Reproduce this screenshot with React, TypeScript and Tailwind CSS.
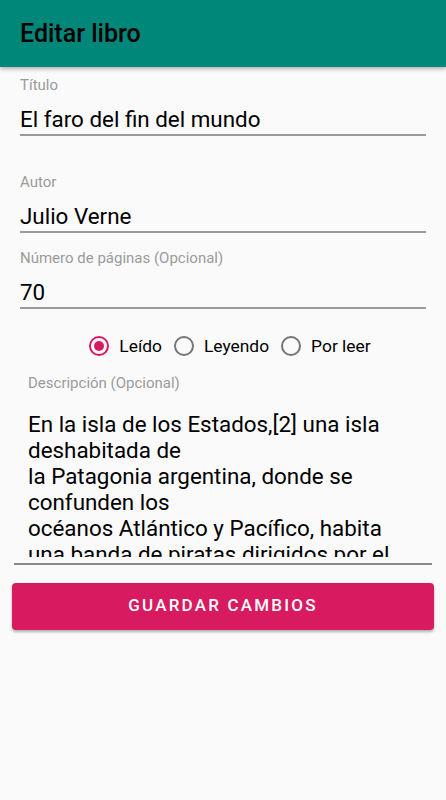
import { useState } from "react";

const font = { fontFamily: "Roboto, 'Noto Sans', sans-serif" };

function Field({ label, value, top }: { label: string; value: string; top: string }) {
  return (
    <div className={`mx-5 ${top}`}>
      <div className="h-5 text-[15px] leading-5 text-[#9a9a9a]">{label}</div>
      <div className="mt-[10px] h-7 text-[22.4px] leading-7 text-black">{value}</div>
      <div className="mt-px h-[2px] bg-[#9a9a9a]" />
    </div>
  );
}

function Radio({ label, checked, onClick }: { label: string; checked: boolean; onClick: () => void }) {
  return (
    <button type="button" onClick={onClick} className="flex items-center gap-[10px]">
      <span
        className={`flex h-5 w-5 items-center justify-center rounded-full border-2 ${
          checked ? "border-[#d81b60]" : "border-[#757575]"
        }`}
      >
        {checked && <span className="h-[10px] w-[10px] rounded-full bg-[#d81b60]" />}
      </span>
      <span className="text-[17.4px] leading-6 text-black">{label}</span>
    </button>
  );
}

export default function App() {
  const [status, setStatus] = useState("leido");
  const lines = [
    "En la isla de los Estados,[2] una isla",
    "deshabitada de",
    "la Patagonia argentina, donde se",
    "confunden los",
    "océanos Atlántico y Pacífico, habita",
    "una banda de piratas dirigidos por el",
  ];

  return (
    <div className="min-h-[800px] w-full bg-[#fafafa]" style={font}>
      <header className="relative z-10 flex h-[67px] items-center bg-[#00877a] px-5 shadow-[0_2px_4px_rgba(0,0,0,0.3)]">
        <h1 className="text-[25px] font-medium text-black">Editar libro</h1>
      </header>

      <Field label="Título" value="El faro del fin del mundo" top="mt-2" />
      <Field label="Autor" value="Julio Verne" top="mt-[36px]" />
      <Field label="Número de páginas (Opcional)" value="70" top="mt-[15px]" />

      <div className="mt-[25px] flex h-6 justify-center gap-3 pl-[14px]">
        <Radio label="Leído" checked={status === "leido"} onClick={() => setStatus("leido")} />
        <Radio label="Leyendo" checked={status === "leyendo"} onClick={() => setStatus("leyendo")} />
        <Radio label="Por leer" checked={status === "porleer"} onClick={() => setStatus("porleer")} />
      </div>

      <div className="mx-[14px] mt-[15px]">
        <div className="px-[14px] text-[15px] leading-5 text-[#9a9a9a]">Descripción (Opcional)</div>
        <div className="mt-[18px] h-[146px] overflow-hidden px-[14px] text-[22.4px] leading-[26px] text-black">
          {lines.map((l) => (
            <div key={l} className="whitespace-nowrap">
              {l}
            </div>
          ))}
        </div>
        <div className="mt-[6px] h-[1.5px] bg-[#8a8a8a]" />
      </div>

      <div className="mx-3 mt-[18px]">
        <button
          type="button"
          className="h-[47px] w-full rounded-[4px] bg-[#d81b60] text-[17px] font-medium tracking-[2.2px] text-white shadow-[0_2px_3px_rgba(0,0,0,0.3)]"
        >
          GUARDAR CAMBIOS
        </button>
      </div>
    </div>
  );
}
